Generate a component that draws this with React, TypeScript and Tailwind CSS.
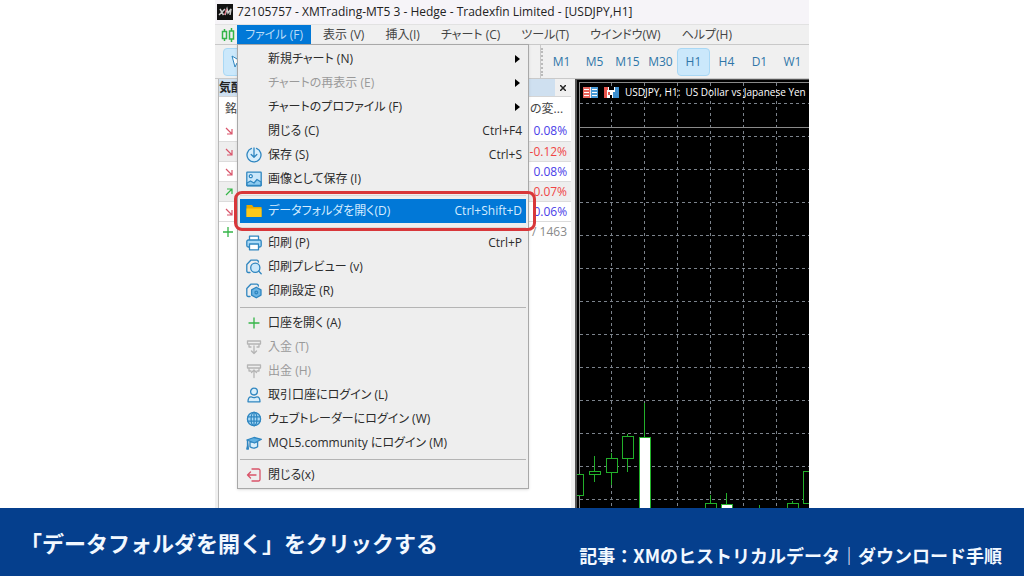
import type { ReactNode } from "react";

const ICON = "#2f86c0";

function Svg({ children, color = ICON }: { children: ReactNode; color?: string }) {
  return (
    <svg
      viewBox="0 0 16 16"
      className="size-4 shrink-0"
      fill="none"
      stroke={color}
      strokeWidth="1.3"
      strokeLinecap="round"
      strokeLinejoin="round"
      aria-hidden="true"
    >
      {children}
    </svg>
  );
}

const icons: Record<string, ReactNode> = {
  save: (
    <Svg>
      <path d="M5.5 1.4A7 7 0 1 0 10.5 1.4" fill="#d8eefb" />
      <path d="M8 1v9M5.2 7.5 8 10.3l2.8-2.8" />
    </Svg>
  ),
  image: (
    <Svg>
      <rect x="0.8" y="1.2" width="14.4" height="13.6" rx="0.5" fill="#c9e7fa" />
      <circle cx="4.8" cy="5.2" r="1.5" fill="#fff" />
      <path d="M1 12l3.5-2 3.5 2 3-3.5 4 2.5v3.5H1z" fill="#8ecbf0" />
    </Svg>
  ),
  folder: (
    <Svg color="none">
      <path d="M0.5 2h5.5l1.5 2h8v10h-15z" fill="#e8a900" />
      <path d="M0.5 5.5h15v8.5h-15z" fill="#ffc91a" />
    </Svg>
  ),
  print: (
    <Svg>
      <path d="M3.5 5V1.2h9V5" fill="#fff" />
      <rect x="0.8" y="5" width="14.4" height="7" rx="1.5" fill="#a9d9f6" />
      <rect x="3.5" y="9" width="9" height="5.8" fill="#fff" />
    </Svg>
  ),
  preview: (
    <Svg>
      <path d="M4 13.5H2.2A1.4 1.4 0 0 1 .8 12V5.5L4.8 1.2h6A1.5 1.5 0 0 1 12.3 3" />
      <circle cx="9.3" cy="8.8" r="4.6" fill="#c9e7fa" />
      <path d="M12.8 12.2l2.4 2.5" />
    </Svg>
  ),
  setup: (
    <Svg>
      <path d="M4 13.5H2.2A1.4 1.4 0 0 1 .8 12V5.5L4.8 1.2h6A1.5 1.5 0 0 1 12.3 3" />
      <path d="M10.3 4.2l4.7 2.7v5.2l-4.7 2.7-4.7-2.7V6.9z" fill="#6db5e4" />
      <circle cx="10.3" cy="9.5" r="1.3" />
    </Svg>
  ),
  plus: (
    <Svg color="#35b548">
      <path d="M8 3v10M3 8h10" />
    </Svg>
  ),
  deposit: (
    <Svg color="#b5b5b5">
      <path d="M5 8H3V5M13 5v3h-2M1.5 2h13v3h-13zM8 7v7.5M5.5 12 8 14.5l2.5-2.5" />
    </Svg>
  ),
  withdraw: (
    <Svg color="#b5b5b5">
      <path d="M5 8H3V5M13 5v3h-2M1.5 2h13v3h-13zM8 14.5V7M5.5 9.5 8 7l2.5 2.5" />
    </Svg>
  ),
  user: (
    <Svg>
      <circle cx="8" cy="4.6" r="3.4" fill="#d8eefb" />
      <path d="M2 14.8c0-3.5 1.5-5 3-5 1.8 1 4.2 1 6 0 1.5 0 3 1.5 3 5z" fill="#d8eefb" />
    </Svg>
  ),
  globe: (
    <Svg>
      <circle cx="8" cy="8" r="6.6" fill="#a9d9f6" />
      <ellipse cx="8" cy="8" rx="2.9" ry="6.6" />
      <path d="M2 5.8h12M2 10.2h12M8 1.4v13.2" />
    </Svg>
  ),
  school: (
    <Svg>
      <path d="M4 7v4.8c2 1.8 5.600 1.600 7.600 0V6.500z" fill="#d8eefb" />
      <path d="M.8 5 8 2.500l7.400 1.800L8.500 8z" fill="#5fb0e2" />
      <path d="M1.500 5.500v5.500l-.7 3h1.600z" fill="#5fb0e2" />
    </Svg>
  ),
  exit: (
    <Svg color="#d9546a">
      <path d="M6 2h6.5A1.5 1.5 0 0 1 14 3.5v9a1.5 1.5 0 0 1-1.5 1.5H6M10 8H1.5M4.5 5 1.5 8l3 3" />
    </Svg>
  ),
};

type Item = {
  label: string;
  icon?: string;
  keys?: string;
  sub?: boolean;
  disabled?: boolean;
  active?: boolean;
};

const groups: Item[][] = [
  [
    { label: "新規チャート (N)", sub: true },
    { label: "チャートの再表示 (E)", sub: true, disabled: true },
    { label: "チャートのプロファイル (F)", sub: true },
    { label: "閉じる (C)", keys: "Ctrl+F4" },
    { label: "保存 (S)", icon: "save", keys: "Ctrl+S" },
    { label: "画像として保存 (I)", icon: "image" },
  ],
  [{ label: "データフォルダを開く(D)", icon: "folder", keys: "Ctrl+Shift+D", active: true }],
  [
    { label: "印刷 (P)", icon: "print", keys: "Ctrl+P" },
    { label: "印刷プレビュー (v)", icon: "preview" },
    { label: "印刷設定 (R)", icon: "setup" },
  ],
  [
    { label: "口座を開く (A)", icon: "plus" },
    { label: "入金 (T)", icon: "deposit", disabled: true },
    { label: "出金 (H)", icon: "withdraw", disabled: true },
    { label: "取引口座にログイン (L)", icon: "user" },
    { label: "ウェブトレーダーにログイン (W)", icon: "globe" },
    { label: "MQL5.community にログイン (M)", icon: "school" },
  ],
  [{ label: "閉じる(x)", icon: "exit" }],
];

function MenuRow({ item }: { item: Item }) {
  const tone = item.active
    ? "bg-[#0178d7] text-[#d5ecff]"
    : item.disabled
      ? "text-[#9a9a9a]"
      : "text-[#2b2b2b]";
  return (
    <button
      type="button"
      role="menuitem"
      disabled={item.disabled}
      className={`flex h-6 w-full items-center pr-1 pl-1.5 text-left ${tone}`}
    >
      <span className="flex w-[22px] shrink-0">{item.icon && icons[item.icon]}</span>
      <span className="flex-1 whitespace-nowrap">{item.label}</span>
      {item.keys && <span>{item.keys}</span>}
      {item.sub && (
        <svg viewBox="0 0 5 8" className="mr-0.5 h-2 w-[5px] fill-black" aria-hidden="true">
          <path d="M0 0l5 4-5 4z" />
        </svg>
      )}
    </button>
  );
}

function FileMenu() {
  return (
    <div
      role="menu"
      aria-label="ファイル"
      className="absolute top-full left-0 z-10 w-[292px] border border-[#a8a8a8] bg-[#eeeeee] px-0.5 pt-0.5 pb-px shadow-sm"
    >
      {groups.map((items, i) => (
        <div key={i}>
          {i > 0 && (
            <div className="flex h-2 items-center">
              <hr className={`w-full ${i < 3 ? "border-[#d9d9d9]" : "border-[#b4b4b4]"}`} />
            </div>
          )}
          {items.map((item) =>
            item.active ? (
              <div key={item.label} className="relative">
                <MenuRow item={item} />
                <div className="pointer-events-none absolute -inset-y-2 -right-2.5 -left-1.5 rounded-lg border-[3px] border-[#d8373a]" />
              </div>
            ) : (
              <MenuRow key={item.label} item={item} />
            ),
          )}
        </div>
      ))}
    </div>
  );
}

const menus = ["表示 (V)", "挿入(I)", "チャート (C)", "ツール(T)", "ウインドウ(W)", "ヘルプ(H)"];
const frames = ["M1", "M5", "M15", "M30", "H1", "H4", "D1", "W1"];

const quotes = [
  { up: false, change: "0.08%" },
  { up: false, change: "-0.12%" },
  { up: false, change: "0.08%" },
  { up: true, change: "-0.07%" },
  { up: false, change: "0.06%" },
];

function Arrow({ up }: { up: boolean }) {
  return (
    <svg viewBox="0 0 8 8" className="size-2" fill="none" stroke={up ? "#35b548" : "#d9546a"} strokeWidth="1.2" aria-hidden="true">
      <path d={up ? "M1 7l6-6M2 1h5v5" : "M1 1l6 6M7 2v5H2"} />
    </svg>
  );
}

function MarketWatch() {
  return (
    <section className="ml-[3px] flex w-[353px] shrink-0 flex-col border-l border-[#b8b8b8] bg-white">
      <header className="flex h-[17px] items-center justify-between bg-[#cfe0f0] font-bold text-[#222]">
        <h2>気配値</h2>
        <button type="button" aria-label="閉じる" className="flex h-full w-4 items-center justify-center bg-[#f0f0f0]">
          <svg viewBox="0 0 6 6" className="size-1.5" stroke="#222" strokeWidth="1.5" aria-hidden="true">
            <path d="M0 0l6 6M6 0L0 6" />
          </svg>
        </button>
      </header>
      <table className="w-full border-t border-[#d5d5d5]">
        <thead>
          <tr className="h-[25px] text-[#444]">
            <th className="pl-1.5 text-left font-normal">銘柄</th>
            <th className="pr-2 text-right font-normal">日の変...</th>
          </tr>
        </thead>
        <tbody>
          {quotes.map((q, i) => (
            <tr key={i} className="h-5 border-b border-[#dcdcdc] odd:bg-white even:bg-[#eeeeee]">
              <td className="pl-1.5">
                <Arrow up={q.up} />
              </td>
              <td className={`pr-1 text-right ${q.change.startsWith("-") ? "text-[#f04545]" : "text-[#4a40e8]"}`}>
                {q.change}
              </td>
            </tr>
          ))}
          <tr className="h-[21px] text-[#8a8a8a]">
            <td className="pl-1">
              <svg viewBox="0 0 10 10" className="size-2.5" stroke="#35b548" strokeWidth="1.3" aria-hidden="true">
                <path d="M5 0v10M0 5h10" />
              </svg>
            </td>
            <td className="pr-1 text-right">6 / 1463</td>
          </tr>
        </tbody>
      </table>
    </section>
  );
}

// pixel coordinates inside the chart pane, one entry per bar
const candles = [
  { x: 4, high: 394, top: 394, bottom: 415, low: 415, w: 8 },
  { x: 18, high: 376, top: 391, bottom: 394, low: 402, w: 11 },
  { x: 35, high: 373, top: 378, bottom: 392, low: 405, w: 11 },
  { x: 51, high: 354, top: 356, bottom: 378, low: 392, w: 11 },
  { x: 68, high: 323, top: 357, bottom: 440, low: 440, w: 11, down: true },
  { x: 134, high: 415, top: 423, bottom: 440, low: 440, w: 11 },
  { x: 150, high: 413, top: 424, bottom: 440, low: 440, w: 11, down: true },
  { x: 183, high: 425, top: 435, bottom: 440, low: 440, w: 11 },
  { x: 216, high: 421, top: 423, bottom: 440, low: 440, w: 11 },
  { x: 232, high: 391, top: 391, bottom: 423, low: 423, w: 11 },
];

function Chart() {
  const cols = Array.from({ length: 40 }, (_, i) => 35 + i * 33);
  const rows = Array.from({ length: 30 }, (_, i) => 24 + i * 33);
  return (
    <section className="relative min-w-0 flex-1 overflow-hidden border-t border-l-2 border-[#555] bg-black">
      <svg className="absolute inset-0 size-full" shapeRendering="crispEdges" role="img" aria-label="USDJPY, H1">
        <g stroke="#7c838c" strokeDasharray="3 3">
          {cols.map((x) => (
            <line key={x} x1={x - 0.5} x2={x - 0.5} y1="3" y2="100%" />
          ))}
          {rows.map((y) => (
            <line key={y} x1="3" x2="100%" y1={y - 0.5} y2={y - 0.5} />
          ))}
        </g>
        <path d="M2.5 600V2.5H2000M3 47.5H2000" stroke="#8a8a8a" fill="none" />
        {candles.map((c) => (
          <g key={c.x} stroke="#22b02a">
            <line x1={c.x - 0.5} x2={c.x - 0.5} y1={c.high} y2={c.low} />
            <rect x={c.x - 6} y={c.top} width={c.w} height={c.bottom - c.top} fill={c.down ? "#fff" : "#000"} />
          </g>
        ))}
      </svg>
      <div className="relative flex items-center gap-1.5 px-1.5 pt-1.5 whitespace-nowrap text-white">
        <svg viewBox="0 0 15 11" className="h-[11px] w-[15px] shrink-0" aria-hidden="true">
          <path d="M0 0h15v11H0z" fill="#f3e6e6" />
          <path d="M0 0h7v11H0z" fill="#e8655d" />
          <path d="M8 0h7v11H8z" fill="#4a9bd6" />
          <path d="M1 2.5h5M1 5.5h5M1 8.5h5M9 2.5h5M9 5.5h5M9 8.5h5" stroke="#fff" />
        </svg>
        <svg viewBox="0 0 15 11" className="h-[11px] w-[15px] shrink-0" aria-hidden="true">
          <path d="M0 0h15v11H0z" fill="#fff" />
          <path d="M0 0h4v3H3v8H0z" fill="#e8554d" />
          <path d="M11 0h4v11H9V5h2z" fill="#3c8fd0" />
          <path d="M5 0h5v3H5zM6 8h2v3H6z" fill="#000" />
          <path d="M4 5h2v3H4z" fill="#e8554d" />
        </svg>
        <span className="text-[10px] leading-3">USDJPY, H1:&nbsp; US Dollar vs Japanese Yen</span>
      </div>
    </section>
  );
}

export default function App() {
  return (
    <div className="flex h-screen flex-col overflow-hidden bg-white font-['Open_Sans','Noto_Sans_CJK_JP',sans-serif]">
      <main className="mx-auto flex min-h-0 w-[58%] flex-1 flex-col bg-[#f0f0f0] text-xs leading-4 [font-feature-settings:'palt']">
        <header className="flex h-6 items-center gap-1 bg-[#f6f4f8] px-0.5 text-[#222]">
          <svg viewBox="0 0 16 16" className="size-4" aria-hidden="true">
            <path d="M0 0h16v16H0z" fill="#111" />
            <path d="M3 5l3.5 6M8 5l-6 6M8 11l2-6 1 4 3-4-1 6" stroke="#ccc" strokeWidth="1.5" fill="none" />
            <path d="M7.5 11l2-6" stroke="#d9546a" />
          </svg>
          <h1 className="whitespace-nowrap">72105757 - XMTrading-MT5 3 - Hedge - Tradexfin Limited - [USDJPY,H1]</h1>
        </header>
        <nav className="flex h-5 items-stretch border-t border-[#e2e2e2] text-[#444]">
          <span className="flex w-[22px] items-center justify-end pr-0.5">
            <svg viewBox="0 0 14 14" className="size-3.5" fill="none" stroke="#35b548" strokeWidth="1.5" aria-hidden="true">
              <path d="M3.5 1v2M3.5 11v2M10.5 0v3M10.5 11v3" />
              <rect x="1.5" y="3.5" width="4" height="7" />
              <rect x="8.5" y="3" width="4" height="8" />
            </svg>
          </span>
          <div className="relative flex">
            <button type="button" aria-haspopup="menu" aria-expanded="true" className="w-[74px] bg-[#0178d7] text-[#b9dcf7]">
              ファイル (F)
            </button>
            <FileMenu />
          </div>
          <div className="flex flex-1 items-center gap-[21px] pl-3 whitespace-nowrap">
            {menus.map((m) => (
              <button key={m} type="button">
                {m}
              </button>
            ))}
          </div>
        </nav>
        <div className="flex h-[35px] items-center justify-between border-t border-b border-[#c9c9c9]">
          <div className="ml-2 flex h-7 w-7 items-center justify-center rounded-sm border border-[#a9d8f5] bg-[#cbe8fb]">
            <svg viewBox="0 0 12 14" className="h-3.5 w-3" fill="#fff" stroke={ICON} aria-hidden="true">
              <path d="M1 1l3 11 2-4 5-1z" />
            </svg>
          </div>
          <div className="flex h-full items-center border-l border-[#c9c9c9] text-[#2f76a8]">
            <span className="h-7 w-1 border-l-2 border-dotted border-[#bbb]" />
            {frames.map((f) => (
              <button
                key={f}
                type="button"
                className={`h-7 w-[33px] rounded-sm border ${f === "H1" ? "border-[#a9d8f5] bg-[#cbe8fb]" : "border-transparent"}`}
              >
                {f}
              </button>
            ))}
          </div>
        </div>
        <div className="flex min-h-0 flex-1 gap-1">
          <MarketWatch />
          <Chart />
        </div>
      </main>
      <footer className="flex h-[68px] shrink-0 justify-between bg-[#053f8d] pr-[22px] pl-5 font-['Noto_Sans_CJK_JP',sans-serif] font-bold whitespace-nowrap text-[#f2f8ff]">
        <p className="pt-4 text-[22px] leading-9">「データフォルダを開く」をクリックする</p>
        <p className="pt-8 text-lg leading-[30px]">記事：XMのヒストリカルデータ｜ダウンロード手順</p>
      </footer>
    </div>
  );
}
